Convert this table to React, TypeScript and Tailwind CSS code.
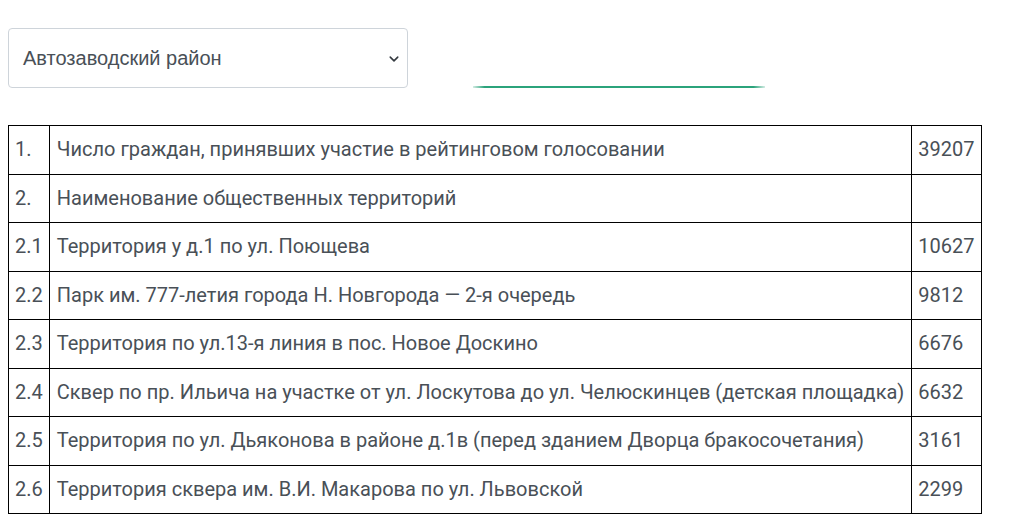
import React from "react";

const rows: [string, string, string][] = [
  ["1.", "Число граждан, принявших участие в рейтинговом голосовании", "39207"],
  ["2.", "Наименование общественных территорий", ""],
  ["2.1", "Территория у д.1 по ул. Поющева", "10627"],
  ["2.2", "Парк им. 777-летия города Н. Новгорода — 2-я очередь", "9812"],
  ["2.3", "Территория по ул.13-я линия в пос. Новое Доскино", "6676"],
  ["2.4", "Сквер по пр. Ильича на участке от ул. Лоскутова до ул. Челюскинцев (детская площадка)", "6632"],
  ["2.5", "Территория по ул. Дьяконова в районе д.1в (перед зданием Дворца бракосочетания)", "3161"],
  ["2.6", "Территория сквера им. В.И. Макарова по ул. Львовской", "2299"],
];

export default function App() {
  return (
    <div className="min-h-screen w-full bg-white px-2 pt-[28px]">
      <div className="flex items-end">
        <div className="relative w-[400px] h-[60px] rounded border border-[#ced4da] bg-white flex items-center pl-[14px] font-['Liberation_Sans',Arial,sans-serif] text-[20px] text-[#495057]">
          Автозаводский район
          <svg className="absolute right-[8px] top-[25px]" width="10" height="10" viewBox="0 0 16 16">
            <path d="M2 5l6 6 6-6" fill="none" stroke="#343a40" strokeWidth="2.5" strokeLinecap="round" strokeLinejoin="round" />
          </svg>
        </div>
        <div className="ml-[65px] w-[292px] h-[2px] bg-[linear-gradient(90deg,rgba(40,160,120,0.2),#2ba37b_4%,#2ba37b_96%,rgba(40,160,120,0.2))]" />
      </div>

      <table className="mt-[37px] w-[972px] border-collapse font-['Roboto',sans-serif] text-[20px] leading-[29.5px] text-[#495057]">
        <tbody>
          {rows.map(([n, name, v]) => (
            <tr key={n}>
              <td className="w-[42px] border border-black px-[6px] py-[9px]">{n}</td>
              <td className="border border-black px-[7px] py-[9px] whitespace-nowrap">{name}</td>
              <td className="w-[69px] border border-black px-[6px] py-[9px]">{v}</td>
            </tr>
          ))}
        </tbody>
      </table>
    </div>
  );
}
